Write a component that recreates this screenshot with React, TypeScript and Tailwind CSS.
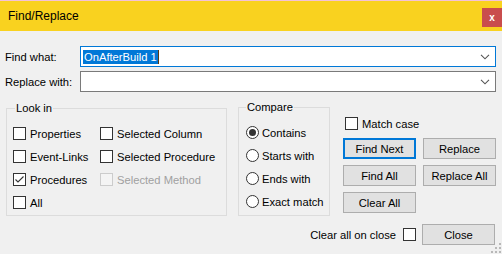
import React from "react";

function Check({ checked = false, disabled = false }: { checked?: boolean; disabled?: boolean }) {
  return (
    <div
      className={
        "w-[13px] h-[13px] border shrink-0 flex items-center justify-center " +
        (disabled ? "border-[#cccccc] bg-[#f4f4f4]" : "border-[#333333] bg-white")
      }
    >
      {checked && (
        <svg width="11" height="11" viewBox="0 0 11 11">
          <path d="M1.5 5.5 L4 8 L9.5 2.5" fill="none" stroke="#333333" strokeWidth="1.1" />
        </svg>
      )}
    </div>
  );
}

function Radio({ checked = false }: { checked?: boolean }) {
  return (
    <div className="w-[13px] h-[13px] rounded-full border border-[#333333] bg-white shrink-0 flex items-center justify-center">
      {checked && <div className="w-[7px] h-[7px] rounded-full bg-[#333333]" />}
    </div>
  );
}

function CheckRow({ label, checked, disabled }: { label: string; checked?: boolean; disabled?: boolean }) {
  return (
    <div className="h-[23px] flex items-center gap-[4px]">
      <Check checked={checked} disabled={disabled} />
      <span className={disabled ? "text-[#a0a0a0]" : "text-black"}>{label}</span>
    </div>
  );
}

function RadioRow({ label, checked }: { label: string; checked?: boolean }) {
  return (
    <div className="h-[23px] flex items-center gap-[3px]">
      <Radio checked={checked} />
      <span>{label}</span>
    </div>
  );
}

function Btn({ label, focused }: { label: string; focused?: boolean }) {
  return (
    <div
      className={
        "w-[73px] h-[21px] bg-[#e1e1e1] flex items-center justify-center " +
        (focused ? "border-2 border-[#0078d7]" : "border border-[#adadad]")
      }
    >
      {label}
    </div>
  );
}

function Chevron() {
  return (
    <svg width="10" height="6" viewBox="0 0 10 6" className="shrink-0">
      <path d="M1 0.8 L5 4.8 L9 0.8" fill="none" stroke="#555555" strokeWidth="1.1" />
    </svg>
  );
}

export default function App() {
  return (
    <div
      className="w-[502px] h-[254px] bg-[#f0f0f0] flex flex-col overflow-hidden relative text-[11.2px] leading-[14px] text-black"
      style={{ fontFamily: '"Liberation Sans", Arial, sans-serif' }}
    >
      {/* title bar */}
      <div className="h-[31px] border-t border-[#f4c2d6] bg-[#f9d21f] flex items-start justify-between shrink-0">
        <div className="pl-[8px] pt-[8px] text-[12px] leading-[14px]">Find/Replace</div>
        <div className="mt-[7px] w-[20px] h-[19px] bg-[#c94d4d] text-white font-bold text-[10px] leading-[19px] flex items-center justify-center">
          x
        </div>
      </div>

      {/* inputs */}
      <div className="pt-[15px] flex flex-col gap-[4px]">
        <div className="flex items-center h-[21px]">
          <div className="w-[80px] pl-[5px]">Find what:</div>
          <div className="w-[416px] h-[21px] border border-[#0078d7] bg-white flex items-center pl-[2px] pr-[5px]">
            <span className="bg-[#0078d7] text-white px-[1px] leading-[14px]">OnAfterBuild 1</span>
            <span className="w-[1px] h-[14px] bg-[#5a3a10]" />
            <div className="flex-1" />
            <Chevron />
          </div>
        </div>
        <div className="flex items-center h-[21px]">
          <div className="w-[80px] pl-[5px]">Replace with:</div>
          <div className="w-[416px] h-[21px] border border-[#7a7a7a] bg-white flex items-center pr-[5px]">
            <div className="flex-1" />
            <Chevron />
          </div>
        </div>
      </div>

      {/* groups */}
      <div className="flex items-start pl-[6px] mt-[15px]">
        <div className="relative mt-[1px] w-[221px] h-[108px] border border-[#dcdcdc]">
          <div className="absolute left-[8px] top-[-8px] bg-[#f0f0f0] px-[1px]">Look in</div>
          <div className="flex pl-[6px] pt-[13px]">
            <div className="w-[87px] flex flex-col">
              <CheckRow label="Properties" />
              <CheckRow label="Event-Links" />
              <CheckRow label="Procedures" checked />
              <CheckRow label="All" />
            </div>
            <div className="flex flex-col">
              <CheckRow label="Selected Column" />
              <CheckRow label="Selected Procedure" />
              <CheckRow label="Selected Method" disabled />
            </div>
          </div>
        </div>

        <div className="relative ml-[11px] w-[92px] h-[109px] border border-[#dcdcdc]">
          <div className="absolute left-[7px] top-[-8px] bg-[#f0f0f0] px-[1px]">Compare</div>
          <div className="flex flex-col pl-[7px] pt-[13px]">
            <RadioRow label="Contains" checked />
            <RadioRow label="Starts with" />
            <RadioRow label="Ends with" />
            <RadioRow label="Exact match" />
          </div>
        </div>

        <div className="ml-[13px] flex flex-col">
          <div className="mt-[10px] ml-[2px] h-[13px] flex items-center gap-[4px]">
            <Check />
            <span>Match case</span>
          </div>
          <div className="mt-[8px] grid grid-cols-[73px_73px] gap-x-[7px] gap-y-[6px]">
            <Btn label="Find Next" focused />
            <Btn label="Replace" />
            <Btn label="Find All" />
            <Btn label="Replace All" />
            <Btn label="Clear All" />
          </div>
        </div>
      </div>

      {/* bottom */}
      <div className="mt-[8px] flex items-center justify-end pr-[7px]">
        <span>Clear all on close</span>
        <div className="ml-[7px] mr-[6px]">
          <Check />
        </div>
        <Btn label="Close" />
      </div>

      {/* resize grip */}
      <svg width="12" height="12" viewBox="0 0 12 12" className="absolute right-0 bottom-0">
        <rect x="9" y="1" width="2" height="2" fill="#b8b8b8" />
        <rect x="5" y="5" width="2" height="2" fill="#b8b8b8" />
        <rect x="9" y="5" width="2" height="2" fill="#b8b8b8" />
        <rect x="1" y="9" width="2" height="2" fill="#b8b8b8" />
        <rect x="5" y="9" width="2" height="2" fill="#b8b8b8" />
        <rect x="9" y="9" width="2" height="2" fill="#b8b8b8" />
      </svg>
    </div>
  );
}
